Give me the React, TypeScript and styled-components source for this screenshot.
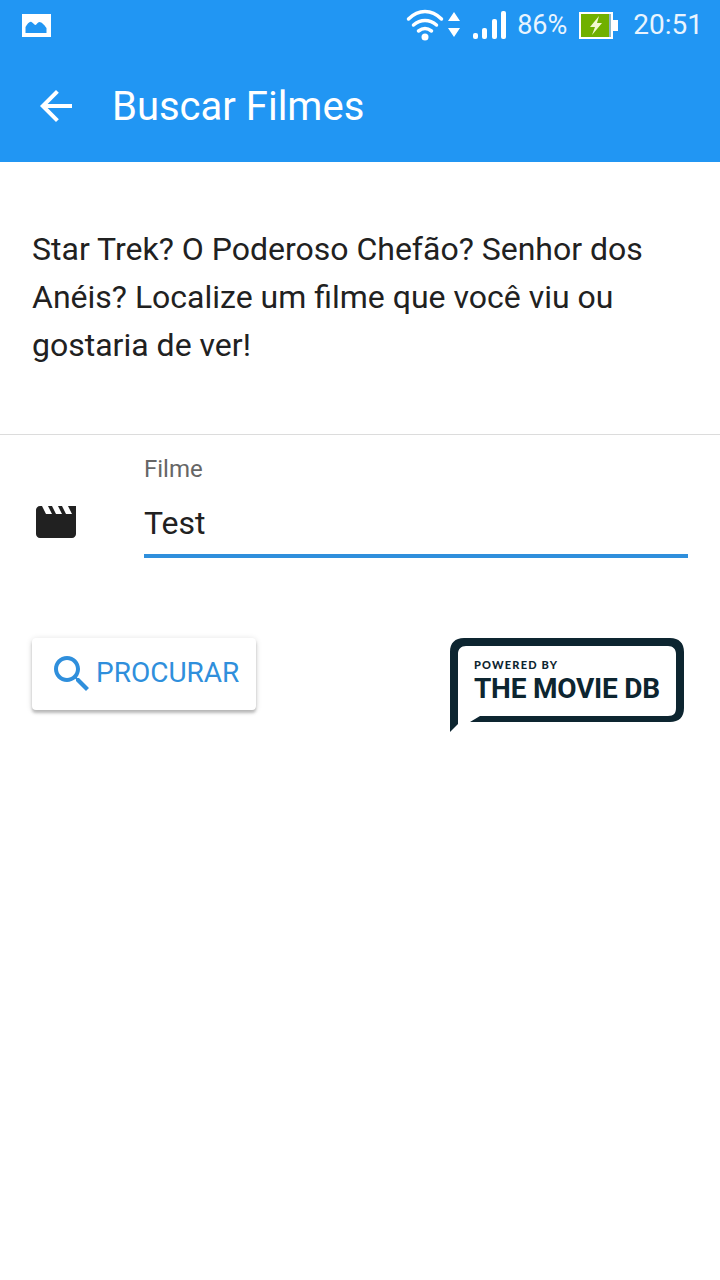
import React from 'react';
import styled, { createGlobalStyle } from 'styled-components';

const GlobalStyle = createGlobalStyle`
  html, body {
    margin: 0;
    padding: 0;
    background: #ffffff;
    font-family: Roboto, "Liberation Sans", sans-serif;
  }
  * {
    box-sizing: border-box;
  }
`;

const Page = styled.div`
  width: 720px;
  height: 1280px;
  overflow: hidden;
  background: #ffffff;
  display: flex;
  flex-direction: column;
`;

const Top = styled.header`
  height: 162px;
  background: #2196f3;
  color: #ffffff;
  display: flex;
  flex-direction: column;
`;

const StatusBar = styled.div`
  height: 50px;
  padding: 0 17px 0 22px;
  display: flex;
  align-items: center;
  justify-content: space-between;
`;

const StatusGroup = styled.div`
  display: flex;
  align-items: center;
`;

const StatusText = styled.span<{ $size: number; $left: number }>`
  font-size: ${(p) => p.$size}px;
  margin-left: ${(p) => p.$left}px;
  line-height: 50px;
  color: #e9f4fe;
`;

const StatusIcon = styled.svg<{ $left: number }>`
  display: block;
  margin-left: ${(p) => p.$left}px;
`;

const Toolbar = styled.div`
  height: 112px;
  padding-left: 40px;
  display: flex;
  align-items: center;
`;

const Title = styled.h1`
  margin: 2px 0 0 40px;
  font-size: 40px;
  font-weight: 400;
  line-height: 48px;
`;

const Intro = styled.p`
  margin: 0;
  padding: 63px 32px 65px;
  font-size: 32px;
  line-height: 48px;
  color: #212121;
  border-bottom: 1px solid #dcdcdc;
`;

const FieldRow = styled.div`
  display: flex;
  padding: 20px 32px 0 36px;
`;

const FieldIcon = styled.div`
  width: 108px;
  padding-top: 51px;
`;

const Field = styled.div`
  flex: 1;
`;

const Label = styled.label`
  display: block;
  font-size: 24px;
  line-height: 28px;
  color: #666666;
`;

const Value = styled.div`
  margin-top: 21px;
  height: 54px;
  font-size: 32px;
  line-height: 38px;
  color: #212121;
  border-bottom: 4px solid #2f8fdc;
`;

const Actions = styled.div`
  margin-top: 80px;
  padding: 0 36px 0 32px;
  display: flex;
  justify-content: space-between;
  align-items: flex-start;
`;

const SearchButton = styled.button`
  width: 224px;
  height: 72px;
  padding: 0 0 2px 22px;
  border: 0;
  border-radius: 4px;
  background: #ffffff;
  box-shadow: 0 3px 3px rgba(0, 0, 0, 0.22), 0 1px 6px rgba(0, 0, 0, 0.14);
  display: flex;
  align-items: center;
  gap: 7px;
  color: #2f8fdc;
  font-family: inherit;
  font-size: 28px;
  line-height: 32px;
`;

export default function App() {
  return (
    <Page>
      <GlobalStyle />
      <Top>
        <StatusBar>
          <svg width="29" height="23" viewBox="0 0 29 23">
            <path
              fill="#fff"
              fillRule="evenodd"
              d="M0 0h29v23H0zM3.500 19v-6c2-3 4-6 6-5 2 1 3 3 4 3s2-3 4-3 5 3 7 6v5z"
            />
          </svg>
          <StatusGroup>
            <StatusIcon $left={0} width="40" height="36" viewBox="-1.500 0 40 36">
              <g fill="none" stroke="#fff" strokeWidth="3.500" strokeLinecap="round">
                <path d="M3 12c10-10 23-10 33 0" />
                <path d="M8 18c7-6 16-6 23 0" />
                <path d="M13 24c4-3 9-3 13 0" />
              </g>
              <circle cx="19.500" cy="30" r="3.500" fill="#fff" />
            </StatusIcon>
            <StatusIcon $left={3} width="14" height="30" viewBox="0 0 14 30">
              <path fill="#fff" d="M7 2l6 9H1zM1 18h12l-6 9z" />
            </StatusIcon>
            <StatusIcon $left={12} width="34" height="30" viewBox="0 0 34 30">
              <g fill="#fff">
                <rect x="0" y="23" width="5" height="6" rx="2" />
                <rect x="9" y="18" width="5" height="11" rx="2" />
                <rect x="19" y="9" width="5" height="20" rx="2" />
                <rect x="28" y="1" width="5" height="28" rx="2" />
              </g>
            </StatusIcon>
            <StatusText $size={27} $left={10}>86%</StatusText>
            <StatusIcon $left={12} width="39" height="27" viewBox="0 0 39 27">
              <rect x="1" y="1" width="32" height="25" fill="#70b000" stroke="#fff" strokeWidth="2" />
              <rect x="30" y="2" width="2" height="23" fill="#8fb8c8" />
              <rect x="34" y="8" width="5" height="11" fill="#fff" />
              <path fill="#f4f8d0" d="M20 4l-9 11h5l-3 8 10-12h-5z" />
            </StatusIcon>
            <StatusText $size={28} $left={15}>20:51</StatusText>
          </StatusGroup>
        </StatusBar>
        <Toolbar>
          <svg width="32" height="32" viewBox="4 4 16 16">
            <path fill="#fff" d="M20 11H7.830l5.590-5.590L12 4l-8 8 8 8 1.410-1.410L7.830 13H20v-2z" />
          </svg>
          <Title>Buscar Filmes</Title>
        </Toolbar>
      </Top>
      <Intro>Star Trek? O Poderoso Chefão? Senhor dos Anéis? Localize um filme que você viu ou gostaria de ver!</Intro>
      <FieldRow>
        <FieldIcon>
          <svg width="40" height="32" viewBox="2 4 20 16">
            <path
              fill="#212121"
              d="M18 4l2 4h-3l-2-4h-2l2 4h-3l-2-4H8l2 4H7L5 4H4c-1.100 0-1.990.9-1.990 2L2 18c0 1.100.9 2 2 2h16c1.100 0 2-.9 2-2V4h-4z"
            />
          </svg>
        </FieldIcon>
        <Field>
          <Label>Filme</Label>
          <Value>Test</Value>
        </Field>
      </FieldRow>
      <Actions>
        <SearchButton>
          <svg width="35" height="35" viewBox="3 3 17.500 17.500">
            <path
              fill="#2f8fdc"
              d="M15.500 14h-.79l-.28-.27C15.410 12.590 16 11.110 16 9.500 16 5.910 13.090 3 9.500 3S3 5.910 3 9.500 5.910 16 9.500 16c1.610 0 3.090-.59 4.230-1.570l.27.28v.79l5 4.990L20.490 19l-4.990-5zm-6 0C7.010 14 5 11.990 5 9.500S7.010 5 9.500 5 14 7.010 14 9.500 11.990 14 9.500 14z"
            />
          </svg>
          PROCURAR
        </SearchButton>
        <svg width="234" height="94" viewBox="0 0 234 94">
          <path
            fill="#0d2530"
            d="M0 94V14C0 5 5 0 14 0H220C229 0 234 5 234 14V70C234 79 229 84 220 84H20L30 78H218C224 78 226 75 226 70V16C226 11 223 8 218 8H16C11 8 8 11 8 16V86Z"
          />
          <text
            x="24"
            y="31"
            fontFamily="Lato, sans-serif"
            fontSize="11"
            fontWeight="900"
            textLength="83"
            fill="#0d2530"
          >
            POWERED BY
          </text>
          <text
            x="24"
            y="60"
            fontFamily="Roboto, sans-serif"
            fontSize="28"
            fontWeight="700"
            textLength="186"
            fill="#0d2530"
          >
            THE MOVIE DB
          </text>
        </svg>
      </Actions>
    </Page>
  );
}
